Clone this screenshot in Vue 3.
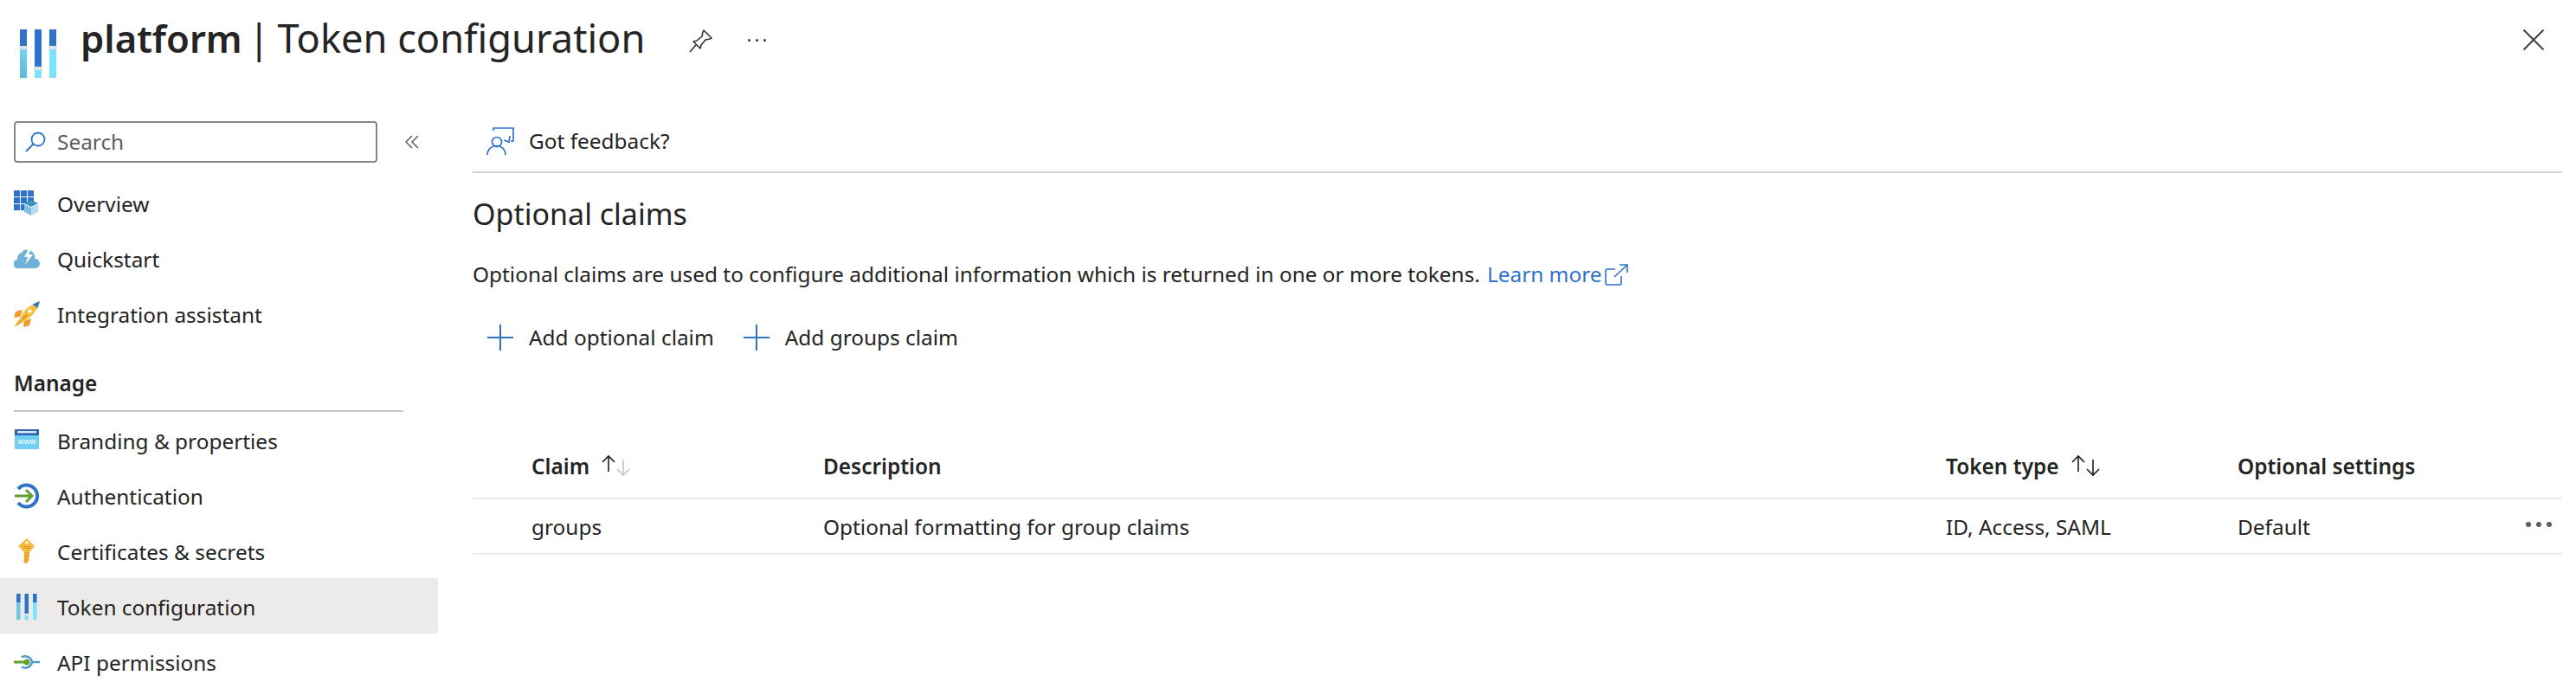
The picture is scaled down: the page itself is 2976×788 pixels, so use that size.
<script setup>
const topItems = [
  { label: 'Overview', icon: 'overview' },
  { label: 'Quickstart', icon: 'quickstart' },
  { label: 'Integration assistant', icon: 'rocket' }
]

const manageItems = [
  { label: 'Branding & properties', icon: 'branding' },
  { label: 'Authentication', icon: 'auth' },
  { label: 'Certificates & secrets', icon: 'key' },
  { label: 'Token configuration', icon: 'token', active: true },
  { label: 'API permissions', icon: 'api' }
]
</script>

<template>
  <div class="page">
    <header class="blade-header">
      <svg class="logo" width="44" height="58" viewBox="0 0 44 58">
        <defs>
          <linearGradient id="logoFade" x1="0" y1="0" x2="0" y2="1">
            <stop offset="0" stop-color="#84e6ff" />
            <stop offset="1" stop-color="#5fb8da" />
          </linearGradient>
        </defs>
        <rect x="1" y="1" width="8" height="56" fill="url(#logoFade)" />
        <rect x="18" y="1" width="8" height="56" fill="#7be3ff" />
        <rect x="35" y="1" width="8" height="56" fill="#7be3ff" />
        <rect x="1" y="1" width="8" height="20" fill="#2f72cc" />
        <rect x="18" y="1" width="8" height="44" fill="#2f72cc" />
        <rect x="35" y="1" width="8" height="20" fill="#2f72cc" />
        <rect x="0" y="20" width="10" height="4" rx="1" fill="#dfe3e6" />
        <rect x="17" y="44" width="10" height="4" rx="1" fill="#dfe3e6" />
        <rect x="34" y="20" width="10" height="4" rx="1" fill="#dfe3e6" />
      </svg>
      <h1 class="title"><strong>platform</strong><span class="bar">|</span>Token configuration</h1>
      <svg class="pin" width="28" height="28" viewBox="0 0 28 28" fill="none" stroke="#323130" stroke-width="1.6">
        <path d="M17 2l9 9-2 1-5 1-5 6-1 4-8-8 4-1 6-5 1-5z" stroke-linejoin="round" />
        <path d="M8 19l-7 8" />
      </svg>
      <span class="more-dots">
        <i></i><i></i><i></i>
      </span>
      <svg class="close" width="26" height="26" viewBox="0 0 26 26" stroke="#404040" stroke-width="2">
        <path d="M1.500 1.500l23 23M24.500 1.500l-23 23" />
      </svg>
    </header>

    <div class="body">
      <aside class="sidebar">
        <div class="search-row">
          <div class="search">
            <svg width="24" height="24" viewBox="0 0 24 24" fill="none" stroke="#2f72cc" stroke-width="1.8">
              <circle cx="15" cy="9" r="7.500" />
              <path d="M9.500 14.500L1 23" />
            </svg>
            <span>Search</span>
          </div>
          <svg class="collapse" width="18" height="16" viewBox="0 0 18 16" fill="none" stroke="#605e5c" stroke-width="1.500">
            <path d="M9 1L2 8l7 7M16 1L9 8l7 7" />
          </svg>
        </div>

        <nav>
          <div v-for="item in topItems" :key="item.label" class="nav-item">
            <svg class="nav-icon" width="30" height="30" viewBox="0 0 30 30">
              <g v-if="item.icon === 'overview'">
                <path fill="#2f72cc" d="M0 0h7v7H0zM8 0h7v7H8zM16 0h7v7h-7zM0 8h7v7H0zM8 8h7v7H8zM16 8h7v7h-7zM0 16h7v7H0zM8 16h4v7H8z" />
                <path fill="#3d8fc4" d="M20 11l8 4-8 4-8-4z" />
                <path fill="#7fbfe0" d="M12 16l8 4v9l-8-4z" />
                <path fill="#b9dcef" d="M20 20l8-4v9l-8 4z" />
              </g>
              <g v-else-if="item.icon === 'quickstart'">
                <path fill="#6fb2d8" d="M5 26a5 5 0 0 1-1-10 7 7 0 0 1 5-8 7 7 0 0 1 8-3 8 8 0 0 1 7 10 5.500 5.500 0 0 1 1 11z" />
                <path fill="#fff" d="M18 2l-6 11h4l-3 9 9-12h-5l4-8z" />
              </g>
              <g v-else>
                <path fill="#ef9a2d" d="M10 10L2 12l-2 7 7-1zM20 20l-2 8-7 2 1-7z" />
                <path fill="#f0ab2c" d="M7 20l4 4-11 6z" />
                <path fill="#f3c13a" d="M7 20C10 11 19 4 30 0c-3 11-10 19-19 24z" />
                <path fill="#2f72cc" d="M22 3.500L30 0l-3 8.500c-1.500-2-3-3.500-5-5z" />
                <circle cx="18.500" cy="11.500" r="2.300" fill="#f4f4f4" />
                <path stroke="#d9742a" stroke-width="1.500" d="M10 21l5-5" />
              </g>
            </svg>
            <span>{{ item.label }}</span>
          </div>

          <div class="section-title">Manage</div>

          <div v-for="item in manageItems" :key="item.label" class="nav-item" :class="{ active: item.active }">
            <svg class="nav-icon" width="30" height="30" viewBox="0 0 30 30">
              <g v-if="item.icon === 'branding'">
                <rect x="1" y="2" width="28" height="23" rx="1" fill="#6fd0f2" />
                <rect x="1" y="2" width="28" height="7" fill="#2b62ad" />
                <rect x="4" y="4" width="22" height="2.500" fill="#d6e8f5" />
                <text x="15" y="19" text-anchor="middle" class="www">www</text>
              </g>
              <g v-else-if="item.icon === 'auth'" fill="none">
                <path stroke="#2f72cc" stroke-width="4" d="M5 7a12.500 12.500 0 1 1 0 16" />
                <path stroke="#62a132" stroke-width="3" d="M1 15h20M14 8l7 7-7 7" />
              </g>
              <g v-else-if="item.icon === 'key'">
                <path fill="#f5bb3c" d="M15 0l9 9-6 7h-6L5 9z" />
                <path fill="#eda62b" d="M12 16h6v5l-1.500 1.500 1.500 2-1.500 2-2 3-3-2z" />
                <circle cx="15" cy="5" r="1.800" fill="#fff" />
                <path stroke="#d9912a" d="M11 9.500h8M11 11.500h8" />
              </g>
              <g v-else-if="item.icon === 'token'">
                <rect x="3" y="0" width="4.500" height="30" fill="#6cc8e6" />
                <rect x="12.500" y="25" width="4.500" height="5" fill="#7be3ff" />
                <rect x="22" y="0" width="4.500" height="30" fill="#7be3ff" />
                <rect x="3" y="0" width="4.500" height="10" fill="#2f72cc" />
                <rect x="12.500" y="0" width="4.500" height="23" fill="#2f72cc" />
                <rect x="22" y="0" width="4.500" height="10" fill="#2f72cc" />
              </g>
              <g v-else fill="none">
                <path stroke="#4f9ccb" stroke-width="2.500" d="M9 9.500a8 8 0 0 1 12 5.500h9M21 15a8 8 0 0 1-12 5.500" />
                <path stroke="#62a132" stroke-width="3" d="M0 15h14" />
                <circle cx="15" cy="15" r="3.500" fill="#62a132" />
              </g>
            </svg>
            <span>{{ item.label }}</span>
          </div>
        </nav>
      </aside>

      <main class="content">
        <div class="feedback-bar">
          <svg width="32" height="32" viewBox="0 0 32 32" fill="none" stroke="#2f72cc" stroke-width="1.700">
            <path d="M8 4V1h23v15h-3" />
            <path d="M27 10l-1 7-6-2" />
            <circle cx="12" cy="17" r="5.500" />
            <path d="M1 32c0-14 21-14 21 0" />
          </svg>
          <span>Got feedback?</span>
        </div>

        <h2 class="heading">Optional claims</h2>
        <p class="intro">
          Optional claims are used to configure additional information which is returned in one or more tokens.
          <a class="learn">Learn more</a>
          <svg class="external" width="27" height="25" viewBox="0 0 27 25" fill="none" stroke="#2f72cc" stroke-width="1.600">
            <path d="M12 6H3a2 2 0 0 0-2 2v14a2 2 0 0 0 2 2h14a2 2 0 0 0 2-2v-8" />
            <path d="M11 15L25 2M17 1h9v9" />
          </svg>
        </p>

        <div class="actions">
          <div class="action">
            <svg width="30" height="30" viewBox="0 0 30 30" stroke="#2f72cc" stroke-width="2"><path d="M15 0v30M0 15h30" /></svg>
            <span>Add optional claim</span>
          </div>
          <div class="action">
            <svg width="30" height="30" viewBox="0 0 30 30" stroke="#2f72cc" stroke-width="2"><path d="M15 0v30M0 15h30" /></svg>
            <span>Add groups claim</span>
          </div>
        </div>

        <div class="claims">
          <div class="tr th">
            <div class="cell">
              Claim
              <svg class="sort" width="34" height="26" viewBox="0 0 34 26" fill="none" stroke-width="1.600">
                <path stroke="#201f1e" d="M8 20V2M1 9l7-7 7 7" />
                <path stroke="#c8c6c4" d="M25 6v18M18 17l7 7 7-7" />
              </svg>
            </div>
            <div class="cell">Description</div>
            <div class="cell">
              Token type
              <svg class="sort" width="34" height="26" viewBox="0 0 34 26" fill="none" stroke="#201f1e" stroke-width="1.600">
                <path d="M8 20V2M1 9l7-7 7 7" />
                <path d="M25 6v18M18 17l7 7 7-7" />
              </svg>
            </div>
            <div class="cell">Optional settings</div>
          </div>
          <div class="tr row">
            <div class="cell">groups</div>
            <div class="cell">Optional formatting for group claims</div>
            <div class="cell">ID, Access, SAML</div>
            <div class="cell">Default</div>
            <span class="row-menu"><i></i><i></i><i></i></span>
          </div>
        </div>
      </main>
    </div>
  </div>
</template>

<style>
html,
body {
  margin: 0;
  background: #fff;
}
</style>

<style scoped>
.page {
  width: 2976px;
  height: 788px;
  overflow: hidden;
  background: #fff;
  color: #242424;
  font-family: "Noto Sans", "Open Sans", sans-serif;
  font-size: 24.4px;
}

.blade-header {
  height: 126px;
  display: flex;
  align-items: flex-start;
  padding: 33px 36px 0 22px;
  box-sizing: border-box;
}

.logo {
  flex: none;
}

.title {
  margin: -21px 0 0 27px;
  font-size: 45.2px;
  font-weight: 400;
  line-height: 64px;
  white-space: nowrap;
}

.title strong {
  font-size: 43.6px;
  font-weight: 600;
}

.bar {
  margin: 0 9px 0 7px;
}

.pin {
  margin-left: 51px;
}

.more-dots {
  display: flex;
  gap: 6px;
  margin: 12px 0 0 40px;
}

.more-dots i {
  width: 3px;
  height: 3px;
  border-radius: 50%;
  background: #323130;
}

.close {
  margin: 0 0 0 auto;
}

.body {
  display: flex;
}

.sidebar {
  width: 506px;
  flex: none;
}

.search-row {
  display: flex;
  align-items: center;
  height: 76px;
  padding: 0 0 1px 16px;
  box-sizing: border-box;
}

.search {
  width: 420px;
  height: 48px;
  box-sizing: border-box;
  border: 2px solid #8a8886;
  border-radius: 4px;
  display: flex;
  align-items: center;
  gap: 13px;
  padding-left: 11px;
  color: #605e5c;
}

.collapse {
  margin-left: 31px;
}

.nav-item {
  height: 64px;
  box-sizing: border-box;
  padding: 2px 0 0 16px;
  display: flex;
  align-items: center;
  gap: 20px;
  white-space: nowrap;
}

.nav-item.active {
  background: #edebe9;
}

.nav-icon {
  flex: none;
}

.www {
  font-size: 9px;
  fill: #fff;
  font-family: "Noto Sans", sans-serif;
}

.section-title {
  margin: 26px 40px 0 16px;
  height: 54px;
  line-height: 46px;
  font-weight: 600;
  border-bottom: 2px solid #c8c6c4;
}

.content {
  flex: 1;
  padding: 0 16px 0 40px;
  min-width: 0;
}

.feedback-bar {
  height: 71px;
  padding: 1px 0 0 16px;
  display: flex;
  align-items: center;
  gap: 17px;
  border-bottom: 2px solid #d6d6d6;
}

.heading {
  margin: 24px 0 0;
  font-size: 34px;
  font-weight: 400;
  line-height: 46px;
}

.intro {
  margin: 29px 0 0;
  line-height: 36px;
  display: flex;
  align-items: center;
  gap: 8px;
  white-space: nowrap;
}

.learn {
  color: #2f72cc;
}

.external {
  margin-left: -5px;
}

.actions {
  display: flex;
  gap: 34px;
  margin-top: 38px;
  padding-left: 17px;
}

.action {
  display: flex;
  align-items: center;
  gap: 18px;
}

.claims {
  margin-top: 95px;
}

.tr {
  position: relative;
  display: grid;
  grid-template-columns: 337px 1297px 337px 1fr;
  align-items: center;
  box-sizing: border-box;
  padding-left: 68px;
  border-bottom: 2px solid #edebe9;
}

.th {
  height: 76px;
  font-weight: 600;
}

.row {
  height: 64px;
}

.cell {
  display: flex;
  align-items: center;
  white-space: nowrap;
}

.sort {
  margin-left: 14px;
}

.row-menu {
  position: absolute;
  right: 12px;
  top: 26px;
  display: flex;
  gap: 6px;
}

.row-menu i {
  width: 6px;
  height: 6px;
  border-radius: 50%;
  background: #605e5c;
}
</style>
